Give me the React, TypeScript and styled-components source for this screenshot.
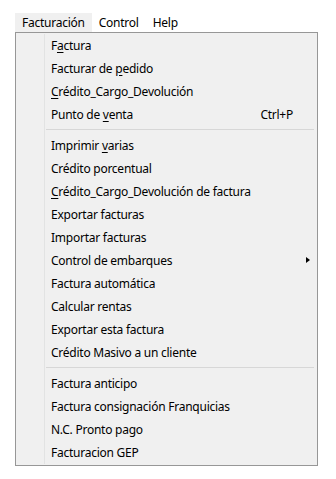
import styled, { createGlobalStyle } from "styled-components";

const GlobalStyle = createGlobalStyle`
  html, body {
    margin: 0;
    padding: 0;
    background: #ffffff;
  }
  body {
    font-family: "Noto Sans", "Open Sans", "Liberation Sans", sans-serif;
    font-size: 12px;
    letter-spacing: -0.25px;
    color: #000000;
  }
`;

type Entry =
  | { kind: "item"; label: string; mnemonic?: number; shortcut?: string; submenu?: boolean }
  | { kind: "sep" };

const entries: Entry[] = [
  { kind: "item", label: "Factura", mnemonic: 1 },
  { kind: "item", label: "Facturar de pedido", mnemonic: 12 },
  { kind: "item", label: "Crédito_Cargo_Devolución", mnemonic: 0 },
  { kind: "item", label: "Punto de venta", mnemonic: 9, shortcut: "Ctrl+P" },
  { kind: "sep" },
  { kind: "item", label: "Imprimir varias", mnemonic: 9 },
  { kind: "item", label: "Crédito porcentual" },
  { kind: "item", label: "Crédito_Cargo_Devolución de factura", mnemonic: 0 },
  { kind: "item", label: "Exportar facturas" },
  { kind: "item", label: "Importar facturas" },
  { kind: "item", label: "Control de embarques", submenu: true },
  { kind: "item", label: "Factura automática" },
  { kind: "item", label: "Calcular rentas" },
  { kind: "item", label: "Exportar esta factura" },
  { kind: "item", label: "Crédito Masivo a un cliente" },
  { kind: "sep" },
  { kind: "item", label: "Factura anticipo" },
  { kind: "item", label: "Factura consignación Franquicias" },
  { kind: "item", label: "N.C. Pronto pago" },
  { kind: "item", label: "Facturacion GEP" },
];

function Label({ text, mnemonic }: { text: string; mnemonic?: number }) {
  if (mnemonic === undefined) return <>{text}</>;
  return (
    <>
      {text.slice(0, mnemonic)}
      <Mnemonic>{text[mnemonic]}</Mnemonic>
      {text.slice(mnemonic + 1)}
    </>
  );
}

export default function App() {
  return (
    <>
      <GlobalStyle />
      <Page>
        <MenuBar>
          <BarSlot>
            <BarItem open>Facturación</BarItem>
            <Dropdown>
              <Gutter />
              {entries.map((e, i) =>
                e.kind === "sep" ? (
                  <Separator key={i} />
                ) : (
                  <Item key={i}>
                    <ItemLabel>
                      <Label text={e.label} mnemonic={e.mnemonic} />
                    </ItemLabel>
                    {e.shortcut && <Shortcut>{e.shortcut}</Shortcut>}
                    {e.submenu && <Arrow />}
                  </Item>
                )
              )}
            </Dropdown>
          </BarSlot>
          <BarItem>Control</BarItem>
          <BarItem>Help</BarItem>
        </MenuBar>
      </Page>
    </>
  );
}

const Page = styled.div`
  padding: 13px 0 0 15px;
  min-height: 479px;
  box-sizing: border-box;
`;

const MenuBar = styled.div`
  display: flex;
  align-items: stretch;
  height: 19px;
`;

const BarSlot = styled.div`
  position: relative;
  display: flex;
`;

const BarItem = styled.div<{ open?: boolean }>`
  display: flex;
  align-items: center;
  padding: 0 7px;
  line-height: 19px;
  background: ${(p) => (p.open ? "#f0f0f0" : "transparent")};
`;

const Dropdown = styled.div`
  position: absolute;
  top: 19px;
  left: 0;
  width: 303px;
  box-sizing: border-box;
  border: 1px solid #979797;
  background: #f0f0f0;
  padding: 1px 2px;
  display: flex;
  flex-direction: column;
`;

const Gutter = styled.div`
  position: absolute;
  left: 28px;
  top: 1px;
  bottom: 1px;
  width: 1px;
  background: #e2e3e3;
`;

const Item = styled.div`
  position: relative;
  height: 23px;
  display: flex;
  align-items: center;
  padding-left: 33px;
  padding-right: 22px;
`;

const ItemLabel = styled.span`
  flex: 1;
  white-space: nowrap;
`;

const Mnemonic = styled.span`
  text-decoration: underline;
  text-underline-offset: 2px;
`;

const Shortcut = styled.span`
  white-space: nowrap;
`;

const Arrow = styled.span`
  position: absolute;
  right: 5px;
  top: 8px;
  width: 0;
  height: 0;
  border-top: 3.5px solid transparent;
  border-bottom: 3.5px solid transparent;
  border-left: 4px solid #000000;
`;

const Separator = styled.div`
  height: 8px;
  position: relative;
  &::after {
    content: "";
    position: absolute;
    left: 28px;
    right: 1px;
    top: 3px;
    height: 1px;
    background: #d7d7d7;
  }
`;
